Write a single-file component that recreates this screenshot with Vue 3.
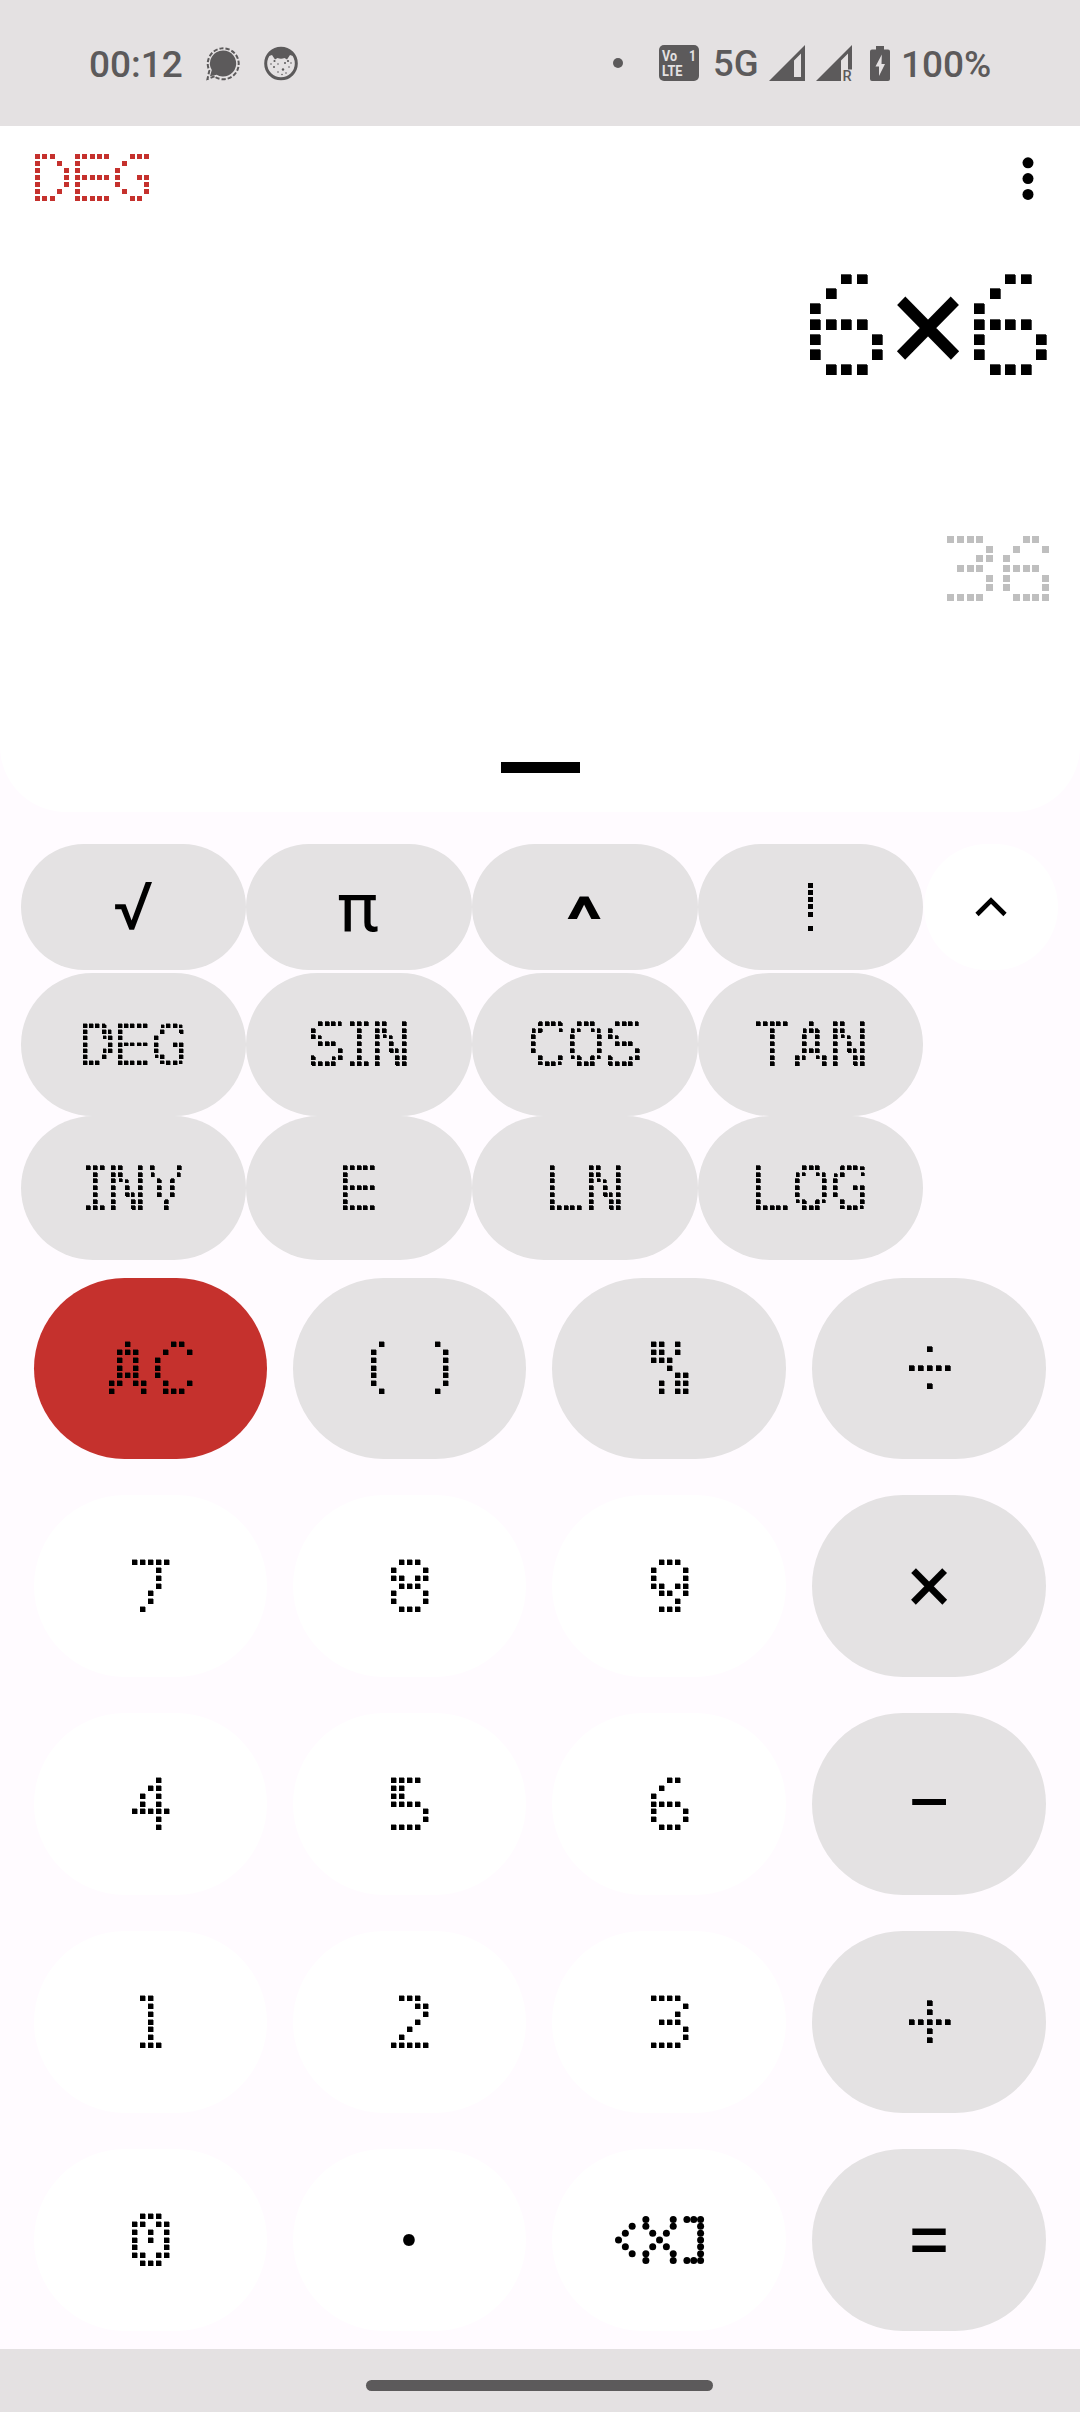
<script setup>
import { h } from 'vue'

const MONO = '"DejaVu Sans Mono", monospace'
const WIDE = '"DejaVu Sans", sans-serif'
const SANS = 'Roboto, sans-serif'
const EM = 200
const ctx = document.createElement('canvas').getContext('2d')

// Transform that makes the ink of a character fill the box x, y, w, h.
function fit(ch, family, weight, x, y, w, ht) {
  ctx.font = `${weight} ${EM}px ${family}`
  const m = ctx.measureText(ch)
  const l = -m.actualBoundingBoxLeft
  const r = m.actualBoundingBoxRight
  const t = -m.actualBoundingBoxAscent
  const b = m.actualBoundingBoxDescent
  const sx = w / (r - l)
  const sy = ht / (b - t)
  return `matrix(${sx} 0 0 ${sy} ${x - l * sx} ${y - t * sy})`
}

const glyphText = (ch, family, weight, transform, extra = {}) =>
  h('text', { 'font-family': family, 'font-weight': weight, 'font-size': EM, transform, ...extra }, ch)

// Dot sizes: px/py pitch, s dot side, g gap between characters, soft edge strength.
const dotSizes = {
  mode: { px: 7.25, py: 7, s: 5, g: 3.75, edge: 0 },
  expr: { px: 15.5, py: 15.17, s: 10, g: 0, edge: 0.7 },
  result: { px: 9.75, py: 9.67, s: 7, g: 7.25, edge: 0 },
  key: { px: 8, py: 7.85, s: 5, g: 6, edge: 0.45, space: 42 },
  fn: { px: 6.8, py: 6.7, s: 4, g: 4.6, edge: 0.7, low: true },
  fnSmall: { px: 6.2, py: 6.2, s: 4, g: 4.4, edge: 0.45, low: true },
  bang: { px: 7.2, py: 7.15, s: 5, g: 0, edge: 0, low: true },
  op: { px: 9, py: 9.3, s: 5, g: 0, edge: 0.7, rows: 5 },
}
const colsOf = { I: 3, 1: 3, '(': 2, ')': 2, '!': 1 }

// Per character drawing: dy / dh shift and stretch in rows, stroke widens the face.
const faces = {
  6: { family: WIDE, dy: 0.42, stroke: 4 },
  '6result': { dy: 0.4, stroke: 4.5 },
  5: { family: WIDE, dy: 0.42, stroke: 4 },
  9: { family: WIDE, dy: -0.5, dh: 0.8, stroke: 4 },
  8: { family: WIDE, stroke: 4 },
  S: { family: WIDE, stroke: 4 },
  C: { family: WIDE, stroke: 3 },
  O: { family: WIDE, stroke: 4 },
  0: { family: 'Inter, sans-serif', weight: 500, feature: '"zero"', stroke: 4 },
  '%': { family: 'Inter, sans-serif', weight: 500, stroke: 9 },
  V: { family: 'Inter, sans-serif', weight: 400, stroke: 4 },
  A: { stroke: 7 },
  4: { stroke: 4 },
  '(': { stroke: 9 },
  ')': { stroke: 9 },
  '÷': { stroke: 0 },
  '+': { stroke: 0 },
}

// Real text shown through a dot matrix: sampled at the grid points, each sample grown to a square.
const DotText = (props) => {
  const { text, size, w, h: ht, color = '#000' } = props
  const d = dotSizes[size]
  const rows = d.rows || 7
  const id = 'dm' + props.id
  const gh = Math.round((rows - 1) * d.py) + d.s
  let x = 0
  let end = 0
  const cells = []
  for (const ch of text) {
    if (ch === ' ') { x += d.space; continue }
    const cols = colsOf[ch] || 5
    cells.push({ ch, x: Math.round(x), cols })
    end = Math.round(x) + Math.round((cols - 1) * d.px) + d.s
    x += cols * d.px + d.g
  }
  const W = w || end
  const H = ht || gh
  const ox = d.low ? Math.floor((W - end) / 2) : Math.ceil((W - end) / 2)
  const oy = Math.floor((H - gh) / 2)
  const n = d.s % 2 ? 1 : 2
  const rad = (d.s - n) / 2
  const points = []
  for (const c of cells)
    for (let i = 0; i < c.cols; i++)
      for (let j = 0; j < rows; j++)
        points.push(h('rect', {
          x: ox + c.x + Math.round(i * d.px) + rad, y: oy + Math.round(j * d.py) + rad,
          width: n, height: n, fill: '#fff', 'shape-rendering': 'crispEdges',
        }))
  const region = { x: 0, y: 0, width: W, height: H }
  return h('svg', { width: W, height: H, viewBox: `0 0 ${W} ${H}`, style: 'display:block;overflow:visible' }, [
    h('defs', [
      h('mask', { id: id + 'm', maskUnits: 'userSpaceOnUse', ...region }, points),
      h('filter', { id: id + 'f', filterUnits: 'userSpaceOnUse', x: -2, y: -2, width: W + 4, height: H + 4, 'color-interpolation-filters': 'sRGB' }, [
        h('feComponentTransfer', { in: 'SourceAlpha', result: 'a' }, [h('feFuncA', { type: 'linear', slope: 500, intercept: -200 })]),
        h('feMorphology', { in: 'a', operator: 'dilate', radius: rad, result: 'b' }),
        h('feOffset', { in: 'b', dx: 1, dy: 0, result: 'r' }),
        h('feOffset', { in: 'b', dx: 0, dy: -1, result: 't' }),
        h('feMerge', { result: 'e0' }, [h('feMergeNode', { in: 'r' }), h('feMergeNode', { in: 't' })]),
        h('feComponentTransfer', { in: 'e0', result: 'e' }, [h('feFuncA', { type: 'linear', slope: d.edge })]),
        h('feMerge', { result: 'all' }, [h('feMergeNode', { in: 'e' }), h('feMergeNode', { in: 'b' })]),
        h('feFlood', { 'flood-color': color, result: 'c' }),
        h('feComposite', { in: 'c', in2: 'all', operator: 'in' }),
      ]),
    ]),
    h('g', { filter: `url(#${id}f)` }, [
      h('g', { mask: `url(#${id}m)` }, cells.map((c) => {
        const f = { family: MONO, weight: 400, dy: 0, dh: 0, stroke: 1, ...faces[c.ch], ...faces[c.ch + size] }
        const box = [ox + c.x, oy + f.dy * d.py, Math.round((c.cols - 1) * d.px) + d.s, gh + f.dh * d.py]
        return glyphText(c.ch, f.family, f.weight, fit(c.ch, f.family, f.weight, ...box), {
          stroke: '#000',
          'stroke-width': f.stroke,
          style: f.feature ? { fontFeatureSettings: f.feature } : null,
        })
      })),
    ]),
  ])
}
DotText.props = ['text', 'size', 'w', 'h', 'color', 'id']

// A single plain symbol whose ink fills box = [x, y, width, height].
const InkText = (props) =>
  h('svg', { width: props.w, height: props.h, viewBox: `0 0 ${props.w} ${props.h}`, style: 'display:block;overflow:visible' },
    [glyphText(props.text, SANS, props.weight || 400, fit(props.text, SANS, props.weight || 400, ...props.box))])
InkText.props = ['text', 'w', 'h', 'box', 'weight']

const fnW = [225, 226, 226, 225]
const fnH = [126, 143, 144]
const fnRows = [
  [
    { t: '√', box: [94, 38, 37, 48] },
    { t: 'π', box: [93, 50, 39, 37] },
    { t: '^', box: [95.5, 52, 33.5, 23], weight: 700 },
    { t: '!', size: 'bang' },
  ],
  [{ t: 'DEG', size: 'fnSmall' }, { t: 'SIN', size: 'fn' }, { t: 'COS', size: 'fn' }, { t: 'TAN', size: 'fn' }],
  [{ t: 'INV', size: 'fn' }, { t: 'E', size: 'fn' }, { t: 'LN', size: 'fn' }, { t: 'LOG', size: 'fn' }],
].map((row, r) => row.map((k, c) => ({ ...k, w: fnW[c], h: fnH[r], id: 'f' + r + c })))

const dot = (t, kind = 'num') => ({ t, kind, size: 'key' })
const keyW = [233, 233, 234, 234]
const keyH = [181, 182, 182, 182, 182]
const keys = [
  [dot('AC', 'clear'), dot('( )', 'op'), dot('%', 'op'), { t: '÷', kind: 'op', size: 'op' }],
  [dot('7'), dot('8'), dot('9'), { t: '×', kind: 'op', box: [98.8, 73, 36.5, 37] }],
  [dot('4'), dot('5'), dot('6'), { t: '−', kind: 'op', box: [100, 86, 34, 6.5] }],
  [dot('1'), dot('2'), dot('3'), { t: '+', kind: 'op', size: 'op' }],
  [dot('0'), { t: '.', kind: 'num', box: [110, 85, 12, 12] }, { kind: 'num', back: true }, { t: '=', kind: 'op', box: [100, 79, 34, 24] }],
].flatMap((row, r) => row.map((k, c) => ({ ...k, w: keyW[c], h: keyH[r], id: 'k' + r + c })))

const backRows = [[4, 8, 10, 11, 12], [2, 4, 8, 12], [1, 5, 7, 12], [0, 6, 12], [1, 5, 7, 12], [2, 4, 8, 12], [4, 8, 10, 11, 12]]
const backDots = backRows.flatMap((cols, j) => cols.map((i) => ({ x: 3.5 + i * 6.84, y: 3.5 + j * 6.84 })))
</script>

<template>
  <div class="screen">
    <header class="status">
      <span class="clock">00:12</span>
      <svg class="chat" width="34" height="35" viewBox="0 0 34 35">
        <path d="M17 4.5a13 13 0 1 1-6.4 24.2L4 30.3l1.8-6.2A13 13 0 0 1 17 4.5z" fill="#5c5a5b" />
        <path d="M8.5 30.3 1.5 33l1.8-8.4A15.5 15.5 0 1 1 8.5 30.6" fill="none" stroke="#5c5a5b" stroke-width="2" stroke-dasharray="4.2 2" />
      </svg>
      <svg class="face" width="34" height="35" viewBox="0 0 34 35">
        <circle cx="17" cy="17.5" r="15.3" fill="#e4e1e2" stroke="#5c5a5b" stroke-width="3" />
        <path d="M5 10Q9 2.5 17 2.5T29 10l-3-1-3 4.5-2.5-1.5q-3.5 1.5-7 0L11 13.5 8 9z" fill="#5c5a5b" />
        <g fill="#5c5a5b">
          <circle cx="10.5" cy="15" r="1.1" /><circle cx="24" cy="15" r="1.1" />
          <circle cx="21" cy="17" r="1" /><circle cx="14" cy="18" r=".8" /><circle cx="10" cy="21" r="1" />
          <circle cx="19" cy="23.5" r="1.2" /><circle cx="25" cy="21" r=".8" /><circle cx="14" cy="26" r=".8" />
          <circle cx="22" cy="27" r=".8" /><circle cx="18" cy="28.5" r=".8" /><circle cx="7" cy="18" r=".8" /><circle cx="27" cy="17" r=".8" />
        </g>
      </svg>
      <i class="bullet"></i>
      <svg class="volte" width="40" height="36" viewBox="0 0 40 36">
        <rect width="40" height="36" rx="5" fill="#5c5a5b" />
        <g font-family="Roboto, sans-serif" font-weight="700" font-size="15" fill="#e4e1e2">
          <text x="3" y="16" textLength="15" lengthAdjust="spacingAndGlyphs">Vo</text>
          <text x="30" y="16" textLength="7" lengthAdjust="spacingAndGlyphs">1</text>
          <text x="3" y="31" textLength="20.5" lengthAdjust="spacingAndGlyphs">LTE</text>
        </g>
      </svg>
      <span class="net">5G</span>
      <svg class="sig1" width="36" height="36" viewBox="0 0 36 36">
        <path d="M0 36 36 0v36zM25 15.5V32h7V8.5z" fill="#5c5a5b" fill-rule="evenodd" />
      </svg>
      <svg class="sig2" width="36" height="36" viewBox="0 0 36 36">
        <path d="M0 36 36 0v24.5h-4V8.5l-7 7V36z" fill="#5c5a5b" />
        <text x="26.5" y="36" font-family="Roboto, sans-serif" font-weight="500" font-size="14.5" fill="#5c5a5b">R</text>
      </svg>
      <svg class="batt" width="20" height="35" viewBox="0 0 20 35">
        <path d="M6 0h8v3.5h4a2 2 0 0 1 2 2V33a2 2 0 0 1-2 2H2a2 2 0 0 1-2-2V5.5a2 2 0 0 1 2-2h4z" fill="#5c5a5b" />
        <path d="M11.8 8.5 5.5 20.5h3.5V30L15 18h-3.5z" fill="#e4e1e2" />
      </svg>
      <span class="pct">100%</span>
    </header>

    <main class="display">
      <div class="mode-row">
        <DotText text="DEG" size="mode" color="#c5312d" id="mode" />
        <svg width="12" height="47" viewBox="0 0 12 47" aria-label="More options">
          <circle cx="6" cy="8.8" r="5.5" /><circle cx="6" cy="24.6" r="5.5" /><circle cx="6" cy="40.4" r="5.5" />
        </svg>
      </div>
      <div class="expr">
        <DotText text="6" size="expr" id="e1" />
        <InkText class="times" text="×" :w="64" :h="102" :box="[0.5, 22, 63, 64]" />
        <DotText text="6" size="expr" id="e2" />
      </div>
      <div class="result"><DotText text="36" size="result" color="#bfbfbf" id="res" /></div>
      <div class="handle"></div>
    </main>

    <section class="science">
      <div class="fn-rows">
        <div v-for="(row, r) in fnRows" :key="r" class="fn-row" :class="{ first: r === 0 }">
          <button v-for="k in row" :key="k.id" class="fn" :style="{ width: k.w + 'px', height: k.h + 'px' }">
            <DotText v-if="k.size" :text="k.t" :size="k.size" :w="k.w" :h="k.h" :id="k.id" />
            <InkText v-else :text="k.t" :w="k.w" :h="k.h" :box="k.box" :weight="k.weight" />
          </button>
        </div>
      </div>
      <button class="toggle" aria-label="Collapse">
        <svg width="32" height="20" viewBox="0 0 32 20"><path d="M2 17.5 16 3.5l14 14" fill="none" stroke="#000" stroke-width="4.6" /></svg>
      </button>
    </section>

    <section class="pad">
      <button v-for="k in keys" :key="k.id" class="key" :class="k.kind">
        <svg v-if="k.back" class="back" width="90" height="49" viewBox="0 0 90 49" aria-label="Backspace">
          <circle v-for="(d, i) in backDots" :key="i" :cx="d.x" :cy="d.y" r="3.5" />
        </svg>
        <DotText v-else-if="k.size" :text="k.t" :size="k.size" :w="k.w" :h="k.h" :id="k.id" />
        <InkText v-else :text="k.t" :w="k.w" :h="k.h" :box="k.box" />
      </button>
    </section>

    <footer class="nav"><div class="pill"></div></footer>
  </div>
</template>

<style>
body { margin: 0; }
</style>

<style scoped>
.screen {
  width: 1080px;
  height: 2412px;
  display: flex;
  flex-direction: column;
  overflow: hidden;
  background: #fffbff;
  font-family: Roboto, sans-serif;
}
svg { display: block; flex: none; overflow: visible; }
button { border: 0; padding: 0; margin: 0; color: #000; }

.status {
  height: 126px;
  box-sizing: border-box;
  padding-left: 89px;
  display: flex;
  align-items: center;
  flex: none;
  background: #e4e1e2;
  color: #5c5a5b;
  font-size: 37px;
  font-weight: 500;
  line-height: 44px;
  white-space: nowrap;
}
.clock { width: 117px; padding-top: 3px; }
.face { margin-left: 24px; }
.bullet { width: 10px; height: 10px; border-radius: 50%; background: #5c5a5b; margin-left: 315px; }
.volte { margin-left: 36px; }
.net { width: 56px; margin-left: 14px; padding-top: 2px; font-size: 36.5px; }
.sig2 { margin-left: 11px; }
.batt { margin-left: 18px; }
.pct { margin-left: 11px; padding-top: 3px; }

.display {
  height: 686px;
  flex: none;
  background: #fff;
  border-radius: 0 0 66px 66px;
}
.mode-row { display: flex; justify-content: space-between; padding: 28px 46px 0 35px; }
.expr { display: flex; justify-content: flex-end; padding: 73px 34px 0 0; }
.times { margin: 0 14px; }
.result { display: flex; justify-content: flex-end; padding: 160px 31px 0 0; }
.handle { width: 79px; height: 11px; margin: 161px 0 0 501px; background: #000; }

.science { display: flex; padding: 32px 0 0 21px; height: 416px; flex: none; }
.fn-row { display: flex; }
.fn-row.first { margin-bottom: 3px; }
.fn { border-radius: 72px; background: #e4e2e3; }
.toggle {
  width: 134px;
  height: 126px;
  margin-left: 1px;
  border-radius: 67px;
  background: #fff;
  display: flex;
  align-items: center;
  justify-content: center;
}

.pad {
  display: grid;
  grid-template-columns: 233px 233px 234px 234px;
  grid-template-rows: 181px 182px 182px 182px 182px;
  column-gap: 26px;
  row-gap: 36px;
  padding: 18px 34px;
  flex: none;
}
.key {
  border-radius: 91px;
  display: flex;
  align-items: center;
  justify-content: center;
}
.key.num { background: #fff; }
.key.op { background: #e4e2e3; }
.key.clear { background: #c5312d; }
.back { margin-right: 18px; }

.nav { display: flow-root; height: 63px; flex: none; background: #e4e1e2; }
.pill { width: 347px; height: 11px; margin: 31px 0 0 366px; border-radius: 6px; background: #5c5a5b; }
</style>
